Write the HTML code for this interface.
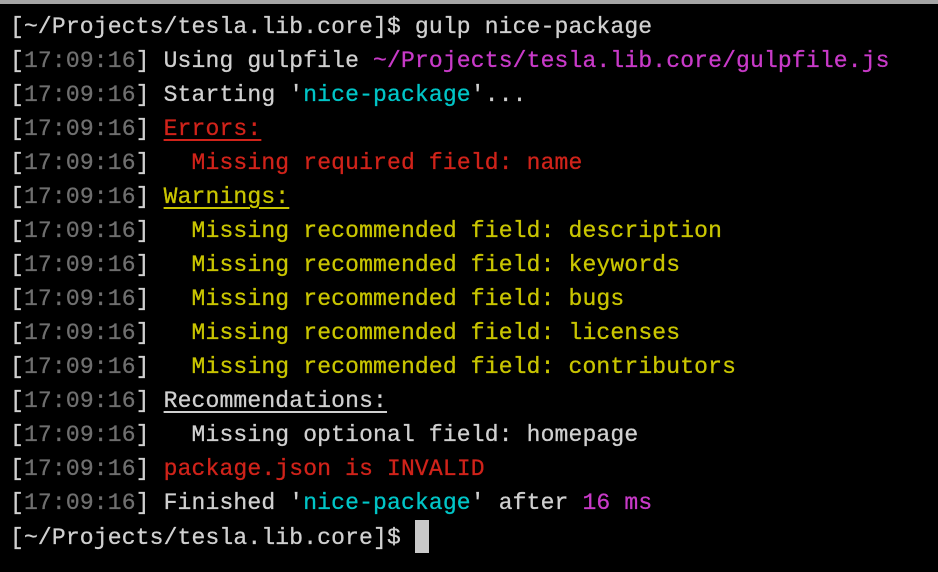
<!DOCTYPE html><html><head><style>
html,body{margin:0;padding:0;background:#000;width:938px;height:572px;overflow:hidden}
.t{border-top:4px solid #a5a5a5;padding:6px 0 0 10px;font-family:"Liberation Mono",monospace;font-size:23px;letter-spacing:0.16px;line-height:34px;color:#d0d0d0;white-space:pre;-webkit-text-stroke:0.3px}
.g{color:#6f6f6f}.r{color:#d0231a}.y{color:#c9c500}.c{color:#00c5c7}.m{color:#c83ac8}
u{text-underline-offset:4px}
.cur{display:inline-block;width:14px;height:33px;background:#c9c9c9;vertical-align:-9px}
</style></head><body><div class="t">[~/Projects/tesla.lib.core]$ gulp nice-package
[<span class="g">17:09:16</span>] Using gulpfile <span class="m">~/Projects/tesla.lib.core/gulpfile.js</span>
[<span class="g">17:09:16</span>] Starting '<span class="c">nice-package</span>'...
[<span class="g">17:09:16</span>] <u class="r">Errors:</u>
[<span class="g">17:09:16</span>]   <span class="r">Missing required field: name</span>
[<span class="g">17:09:16</span>] <u class="y">Warnings:</u>
[<span class="g">17:09:16</span>]   <span class="y">Missing recommended field: description</span>
[<span class="g">17:09:16</span>]   <span class="y">Missing recommended field: keywords</span>
[<span class="g">17:09:16</span>]   <span class="y">Missing recommended field: bugs</span>
[<span class="g">17:09:16</span>]   <span class="y">Missing recommended field: licenses</span>
[<span class="g">17:09:16</span>]   <span class="y">Missing recommended field: contributors</span>
[<span class="g">17:09:16</span>] <u>Recommendations:</u>
[<span class="g">17:09:16</span>]   Missing optional field: homepage
[<span class="g">17:09:16</span>] <span class="r">package.json is INVALID</span>
[<span class="g">17:09:16</span>] Finished '<span class="c">nice-package</span>' after <span class="m">16 ms</span>
[~/Projects/tesla.lib.core]$ <span class="cur"></span></div></body></html>
